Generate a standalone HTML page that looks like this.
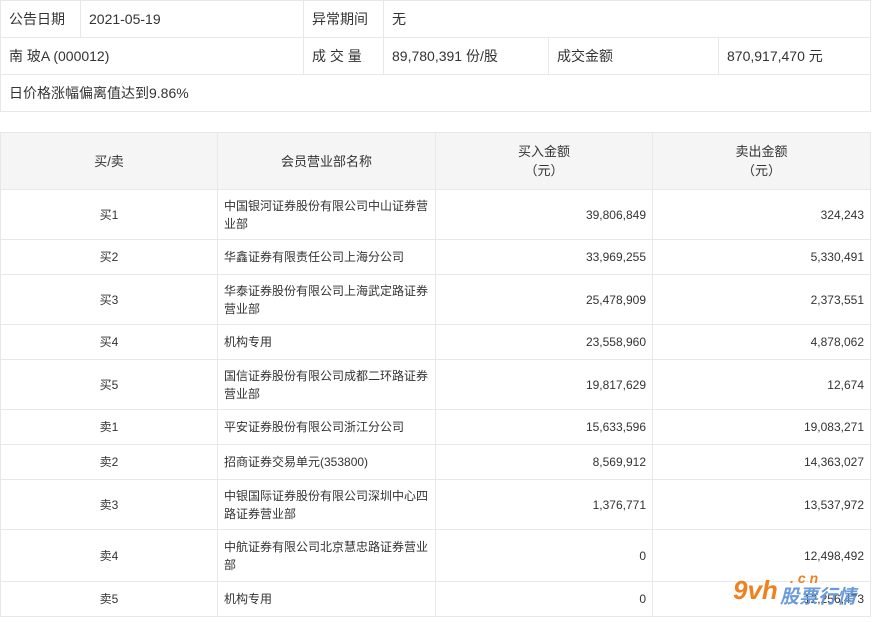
<!DOCTYPE html>
<html><head><meta charset="utf-8"><style>
body{margin:0;background:#fff;font-family:"Liberation Sans","Noto Sans CJK SC",sans-serif;color:#333;width:874px;height:622px;overflow:hidden;position:relative}
table{border-collapse:collapse;position:absolute;left:0;table-layout:fixed}
td{border:1px solid #e8e8e8;padding:0 8px;font-size:14px;white-space:nowrap}
#t1{top:0;width:870px}
#t1 td{height:36px}
#t2{top:132px;width:870px}
#t2 td{font-size:12px;line-height:18px;padding:0 6px}
#t2 th{background:#f5f5f5;border:1px solid #e8e8e8;font-weight:normal;font-size:13px;height:56px;line-height:19px;padding:0}
.c{text-align:center}.r{text-align:right}
.n{white-space:normal;word-break:break-all}
.wm{position:absolute;left:733px;top:575px;font-size:26px;font-weight:bold;font-style:italic;color:#f08020}
.wm2{position:absolute;left:780px;top:582px;font-size:19px;font-weight:bold;font-style:italic;color:#6a9ad8}
.wm3{position:absolute;left:790px;top:570px;font-size:14px;font-weight:bold;font-style:italic;color:#f08020;letter-spacing:4px}
</style></head><body>
<table id="t1">
<col style="width:80px"><col style="width:223px"><col style="width:80px"><col style="width:165px"><col style="width:170px"><col style="width:152px">
<tr><td>公告日期</td><td>2021-05-19</td><td>异常期间</td><td colspan="3">无</td></tr>
<tr><td colspan="2">南 玻A (000012)</td><td>成 交 量</td><td>89,780,391 份/股</td><td>成交金额</td><td>870,917,470 元</td></tr>
<tr><td colspan="6">日价格涨幅偏离值达到9.86%</td></tr>
</table>
<table id="t2">
<col style="width:217px"><col style="width:218px"><col style="width:217px"><col style="width:218px">
<tr><th>买/卖</th><th>会员营业部名称</th><th>买入金额<br>（元）</th><th>卖出金额<br>（元）</th></tr>
<tr style="height:50px"><td class="c">买1</td><td class="n">中国银河证券股份有限公司中山证券营业部</td><td class="r">39,806,849</td><td class="r">324,243</td></tr>
<tr style="height:35px"><td class="c">买2</td><td class="n">华鑫证券有限责任公司上海分公司</td><td class="r">33,969,255</td><td class="r">5,330,491</td></tr>
<tr style="height:50px"><td class="c">买3</td><td class="n">华泰证券股份有限公司上海武定路证券营业部</td><td class="r">25,478,909</td><td class="r">2,373,551</td></tr>
<tr style="height:35px"><td class="c">买4</td><td class="n">机构专用</td><td class="r">23,558,960</td><td class="r">4,878,062</td></tr>
<tr style="height:50px"><td class="c">买5</td><td class="n">国信证券股份有限公司成都二环路证券营业部</td><td class="r">19,817,629</td><td class="r">12,674</td></tr>
<tr style="height:35px"><td class="c">卖1</td><td class="n">平安证券股份有限公司浙江分公司</td><td class="r">15,633,596</td><td class="r">19,083,271</td></tr>
<tr style="height:35px"><td class="c">卖2</td><td class="n">招商证券交易单元(353800)</td><td class="r">8,569,912</td><td class="r">14,363,027</td></tr>
<tr style="height:50px"><td class="c">卖3</td><td class="n">中银国际证券股份有限公司深圳中心四路证券营业部</td><td class="r">1,376,771</td><td class="r">13,537,972</td></tr>
<tr style="height:52px"><td class="c">卖4</td><td class="n">中航证券有限公司北京慧忠路证券营业部</td><td class="r">0</td><td class="r">12,498,492</td></tr>
<tr style="height:35px"><td class="c">卖5</td><td class="n">机构专用</td><td class="r">0</td><td class="r">12,256,473</td></tr>
</table>
<div class="wm">9vh</div><div class="wm3">.cn</div><div class="wm2">股票行情</div>
</body></html>
